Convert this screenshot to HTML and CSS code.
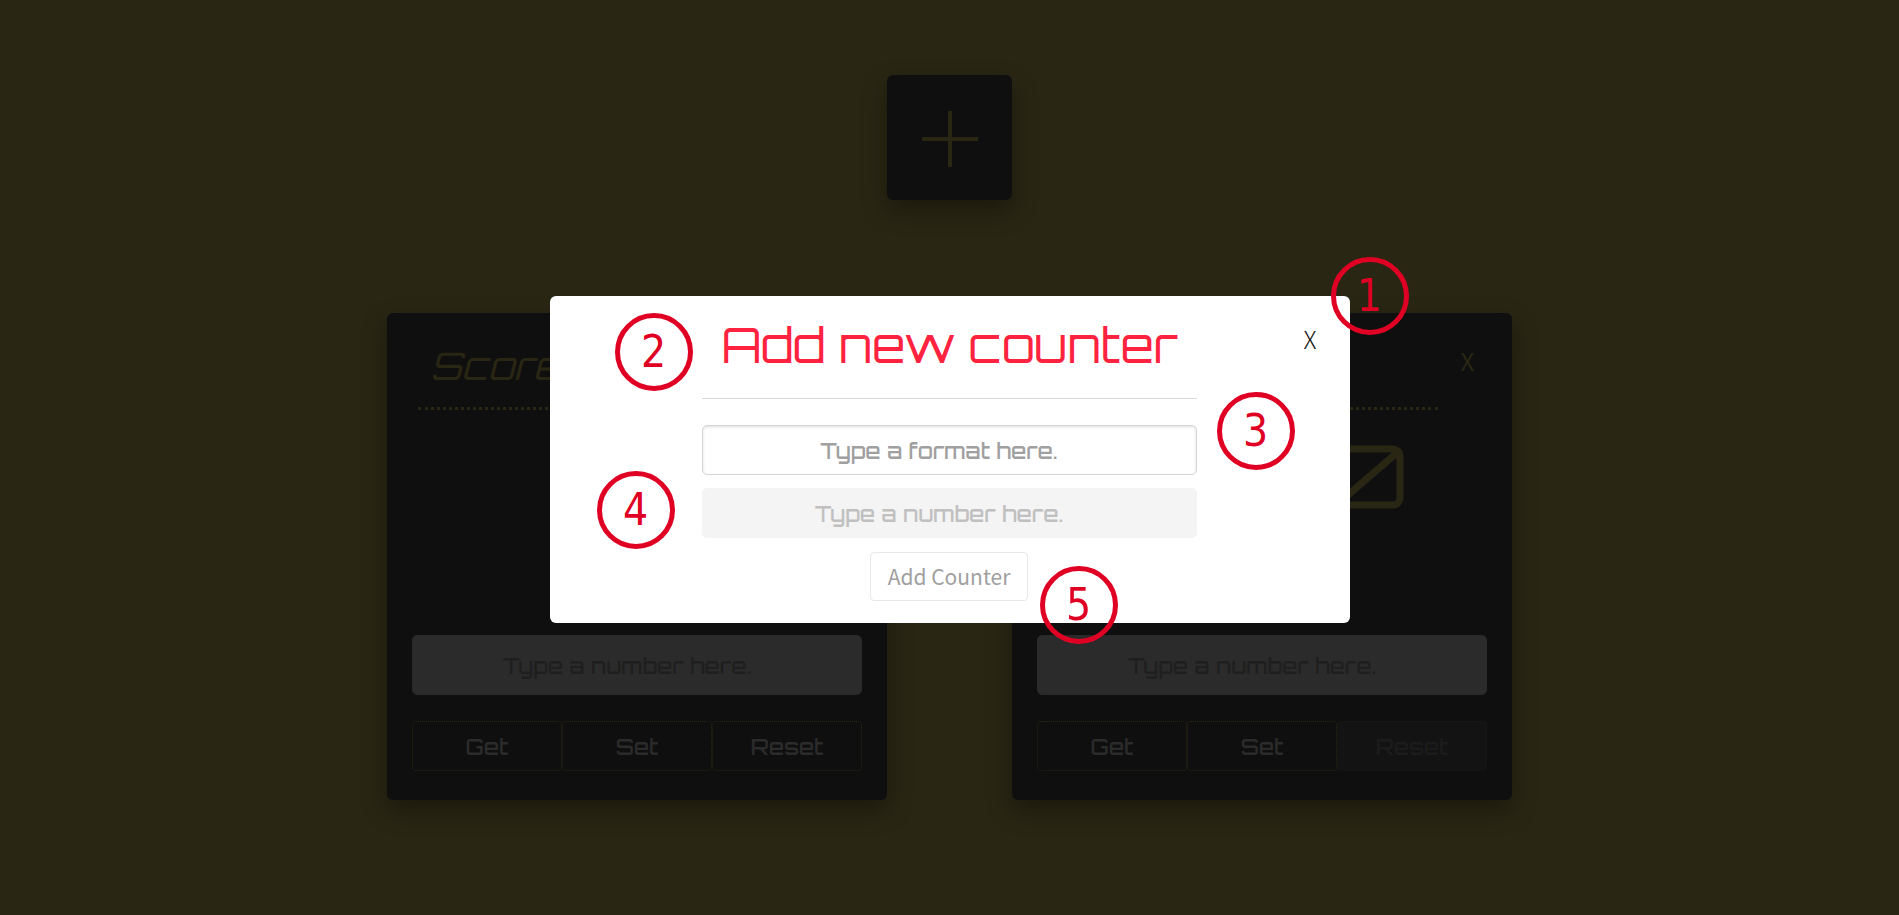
FILE: index.html
```html
<!DOCTYPE html>
<html lang="en">
<head>
<meta charset="utf-8">
<meta name="viewport" content="width=device-width, initial-scale=1">
<title>Counters</title>
<link rel="stylesheet" href="styles.css">
</head>
<body>
<main class="page">
  <button class="add-tile" type="button" aria-label="Add new counter">
    <svg class="plus" viewBox="0 0 56 56" aria-hidden="true"><path d="M28 0V56M0 28H56"/></svg>
  </button>
  <div class="counters">
    <section class="card">
      <header class="card-head">
        <h2 class="card-title">Score</h2>
        <button class="close card-close" type="button" aria-label="Remove Score">X</button>
      </header>
      <div class="display"></div>
      <input class="field card-field" type="text" placeholder="Type a number here." aria-label="Score number">
      <div class="actions">
        <button class="action" type="button">Get</button>
        <button class="action" type="button">Set</button>
        <button class="action" type="button">Reset</button>
      </div>
    </section>
    <section class="card">
      <header class="card-head">
        <h2 class="card-title"></h2>
        <button class="close card-close" type="button" aria-label="Remove counter">X</button>
      </header>
      <div class="display">
        <svg class="mail" viewBox="0 0 92 64" aria-hidden="true"><rect x="4" y="4" width="84" height="56" rx="7"/><path d="M87 6L29 56"/></svg>
      </div>
      <input class="field card-field" type="text" placeholder="Type a number here." aria-label="Counter number">
      <div class="actions">
        <button class="action" type="button">Get</button>
        <button class="action" type="button">Set</button>
        <button class="action" type="button" disabled>Reset</button>
      </div>
    </section>
  </div>
</main>
<div class="overlay">
  <div class="modal" role="dialog" aria-labelledby="modal-title">
    <form class="modal-form">
      <h1 class="modal-title" id="modal-title">Add new counter</h1>
      <input class="field modal-field" type="text" placeholder="Type a format here." aria-label="Format">
      <input class="field modal-field" type="text" placeholder="Type a number here." aria-label="Number" disabled>
      <button class="submit" type="submit" disabled>Add Counter</button>
    </form>
    <button class="close modal-close" type="button" aria-label="Close">X</button>
    <span class="marker marker-1">1</span>
    <span class="marker marker-2">2</span>
    <span class="marker marker-3">3</span>
    <span class="marker marker-4">4</span>
    <span class="marker marker-5">5</span>
  </div>
</div>
</body>
</html>
```
FILE: styles.css
```css
* {
  box-sizing: border-box;
}

body {
  --olive: #2a2614;
  --panel: #0f0f0f;
  --tech: Orbitron, "DejaVu Sans", sans-serif;
  margin: 0;
  min-height: 100vh;
  background: var(--olive);
  font-family: "Source Sans Pro", "Noto Sans CJK JP", "Noto Sans", sans-serif;
  font-size: 22px;
}

button,
input {
  margin: 0;
  font: inherit;
}

.page {
  display: flex;
  flex-direction: column;
  align-items: center;
  gap: 113px;
  padding: 75px 24px;
}

.add-tile {
  display: grid;
  place-items: center;
  width: 125px;
  height: 125px;
  padding: 2px 0 0;
  border: 0;
  border-radius: 6px;
  background: var(--panel);
  box-shadow: 0 10px 25px rgba(0, 0, 0, 0.35);
}

.plus {
  width: 56px;
  height: 56px;
  fill: none;
  stroke: var(--olive);
  stroke-width: 4;
}

.counters {
  display: grid;
  grid-template-columns: repeat(2, 1fr);
  gap: 125px;
  width: 100%;
  max-width: 1125px;
}

.card {
  display: flex;
  flex-direction: column;
  padding: 24px 25px 29px;
  border-radius: 6px;
  background: var(--panel);
  box-shadow: 0 10px 25px rgba(0, 0, 0, 0.35);
}

.card-head {
  display: flex;
  align-items: flex-start;
  justify-content: space-between;
  padding: 0 12px 0 6px;
}

.card-title {
  flex: 1;
  height: 73px;
  margin: 0 22px 0 0;
  padding: 5px 12px 0;
  border-bottom: 3px dotted var(--olive);
  color: var(--olive);
  font-family: var(--tech);
  font-size: 38px;
  font-style: italic;
  font-weight: 400;
  line-height: 48px;
}

.close {
  padding: 0;
  border: 0;
  background: none;
  font-size: 24px;
  font-weight: 300;
  line-height: 30px;
}

.card-close {
  width: 15px;
  margin-top: 9px;
  color: var(--olive);
  font-weight: 400;
}

.display {
  display: flex;
  justify-content: flex-end;
  height: 225px;
  padding: 35px 83px 0;
}

.mail {
  width: 92px;
  height: 64px;
  fill: none;
  stroke: var(--olive);
  stroke-width: 7;
}

.field {
  width: 100%;
  padding: 0 20px 0 0;
  border-radius: 5px;
  font-family: var(--tech);
  font-size: 22px;
  font-weight: 500;
  text-align: center;
}

.field::placeholder {
  opacity: 1;
}

.card-field {
  height: 60px;
  border: 1px solid #292929;
  background: #2b2b2b;
}

.card-field::placeholder {
  color: #1f1f1f;
}

.actions {
  display: grid;
  grid-template-columns: repeat(3, 1fr);
  margin-top: 26px;
}

.action {
  height: 50px;
  border: 1px dotted var(--olive);
  border-radius: 4px;
  background: transparent;
  color: #2b2b2b;
  font-family: var(--tech);
  font-size: 22px;
  font-weight: 500;
}

.action:disabled {
  border-color: #1b1912;
  background: #131313;
  color: #1c1c1c;
}

.overlay {
  position: fixed;
  inset: 0;
  display: flex;
  align-items: flex-start;
  justify-content: center;
  padding-top: 296px;
}

.modal {
  position: relative;
  width: 100%;
  max-width: 800px;
  padding: 15px 153px 22px 152px;
  border-radius: 6px;
  background: #fff;
}

.modal-form {
  display: flex;
  flex-direction: column;
  align-items: center;
}

.modal-title {
  margin: 0 0 26px;
  padding: 0 20px 19px;
  align-self: stretch;
  border-bottom: 1px solid #d9d9d9;
  color: #ff2340;
  font-family: var(--tech);
  font-size: 48px;
  font-weight: 400;
  line-height: 68px;
  text-align: center;
  white-space: nowrap;
}

.modal-field {
  height: 50px;
  margin-bottom: 13px;
  border: 1px solid #d6d6d6;
  background: #fff;
  box-shadow: inset 0 1px 3px #ddd;
}

.modal-field::placeholder {
  color: #a0a0a0;
}

.modal-field:disabled {
  border-color: #f4f4f4;
  background: #f4f4f4;
  box-shadow: none;
}

.modal-field:disabled::placeholder {
  color: #c0c0c0;
}

.submit {
  height: 49px;
  margin-top: 1px;
  padding: 0 17px 2px;
  border: 1px solid #e8e8e8;
  border-radius: 4px;
  background: #fff;
  color: #a0a0a0;
  font-size: 21px;
}

.modal-close {
  position: absolute;
  top: 28px;
  right: 33px;
  color: #111;
}

.marker {
  position: absolute;
  width: 78px;
  height: 78px;
  border: 5px solid #e00024;
  border-radius: 50%;
  color: #e00024;
  font-family: "DejaVu Sans Condensed", "DejaVu Sans", sans-serif;
  font-size: 44px;
  line-height: 67px;
  text-align: center;
}

.marker-1 {
  top: -39px;
  left: 781px;
}

.marker-2 {
  top: 17px;
  left: 65px;
}

.marker-3 {
  top: 96px;
  left: 667px;
}

.marker-4 {
  top: 175px;
  left: 47px;
}

.marker-5 {
  top: 270px;
  left: 490px;
}
```
